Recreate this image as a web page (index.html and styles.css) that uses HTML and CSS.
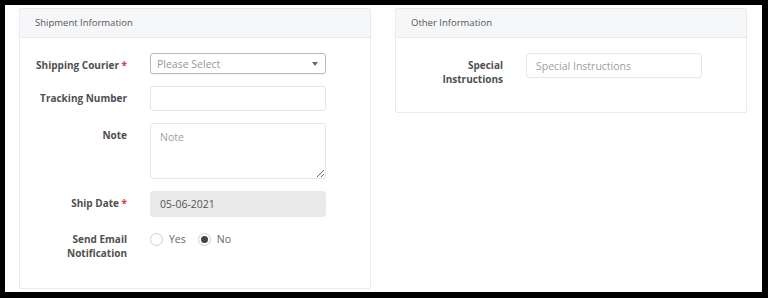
FILE: index.html
```html
<!DOCTYPE html>
<html lang="en">
<head>
  <meta charset="UTF-8">
  <title>Shipment</title>
  <link rel="stylesheet" href="styles.css">
</head>
<body>

  <div class="frame">
    <div class="card">
      <div class="card-head">Shipment Information</div>
      <div class="card-body">
        <div class="row">
          <label class="lbl">Shipping Courier <span class="req">*</span></label>
          <div class="select">
            <span class="ph">Please Select</span>
            <span class="caret"></span>
          </div>
        </div>

        <div class="row">
          <label class="lbl">Tracking Number</label>
          <input class="field" type="text">
        </div>

        <div class="row">
          <label class="lbl">Note</label>
          <textarea class="field area" placeholder="Note"></textarea>
        </div>

        <div class="row row-tight">
          <label class="lbl">Ship Date <span class="req">*</span></label>
          <input class="field readonly" type="text" value="05-06-2021" readonly>
        </div>

        <div class="row">
          <label class="lbl">Send Email<br>Notification</label>
          <div class="radios">
            <span class="radio"></span><span class="radio-text">Yes</span>
            <span class="radio checked"></span><span class="radio-text">No</span>
          </div>
        </div>
      </div>
    </div>

    <div class="card card-short">
      <div class="card-head">Other Information</div>
      <div class="card-body">
        <div class="row">
          <label class="lbl">Special<br>Instructions</label>
          <input class="field" type="text" placeholder="Special Instructions">
        </div>
      </div>
    </div>
  </div>

</body>
</html>
```

FILE: styles.css
```css
body {
  margin: 0;
  background: #000;
  font-family: 'Open Sans', sans-serif;
  color: #555;
}

.frame {
  margin: 5px 6px 6px 5px;
  height: 287px;
  background: #fff;
  box-sizing: border-box;
  padding: 3px 15px 0 14px;
  display: flex;
  align-items: flex-start;
  gap: 24px;
}

.card {
  width: 352px;
  border: 1px solid #e8eaed;
  border-radius: 2px;
  box-sizing: border-box;
  height: 281px;
}

.card-short {
  height: 105px;
}

.card-head {
  height: 28px;
  line-height: 28px;
  padding-left: 15px;
  background: #f5f7f9;
  border-bottom: 1px solid #e8eaed;
  font-size: 9.5px;
  color: #555;
}

.card-body {
  padding-top: 15px;
}

.row {
  display: grid;
  grid-template-columns: 107px 176px;
  column-gap: 23px;
  margin-bottom: 12px;
}

.row-tight {
  margin-bottom: 10px;
}

.lbl {
  text-align: right;
  font-weight: 700;
  font-size: 10px;
  line-height: 14px;
  padding-top: 5px;
  color: #4f4f4f;
}

.req {
  color: #e0393e;
}

.field,
.select {
  box-sizing: border-box;
  width: 176px;
  height: 25px;
  margin: 0;
  border: 1px solid #e6e6e6;
  border-radius: 3px;
  padding: 0 9px;
  font-family: 'Open Sans', sans-serif;
  font-size: 10.5px;
  color: #555;
  background: #fff;
  outline: none;
}

.field::placeholder {
  color: #a0a0a0;
}

.select {
  height: 21px;
  border-color: #b9b9b9;
  display: flex;
  align-items: center;
  justify-content: space-between;
  padding: 0 6px 0 6px;
  box-shadow: 0 1px 1px rgba(0, 0, 0, 0.06);
}

.ph {
  color: #999;
}

.caret {
  width: 0;
  height: 0;
  border-left: 3px solid transparent;
  border-right: 3px solid transparent;
  border-top: 4px solid #666;
  margin-right: 1px;
}

.area {
  height: 56px;
  padding: 5px 9px;
  resize: vertical;
  line-height: 16px;
}

.readonly {
  background: #e9e9e9;
  border-color: #e9e9e9;
  height: 26px;
}

.radios {
  display: flex;
  align-items: center;
  height: 14px;
  padding-top: 5px;
  font-size: 10.5px;
}

.radio {
  width: 13px;
  height: 13px;
  box-sizing: border-box;
  border: 1px solid #cfcfcf;
  border-radius: 50%;
  background: #fff;
  position: relative;
}

.radio.checked::after {
  content: "";
  position: absolute;
  left: 2px;
  top: 2px;
  width: 7px;
  height: 7px;
  border-radius: 50%;
  background: #444;
}

.radio-text {
  margin: 0 12px 0 6px;
  color: #666;
}
```
